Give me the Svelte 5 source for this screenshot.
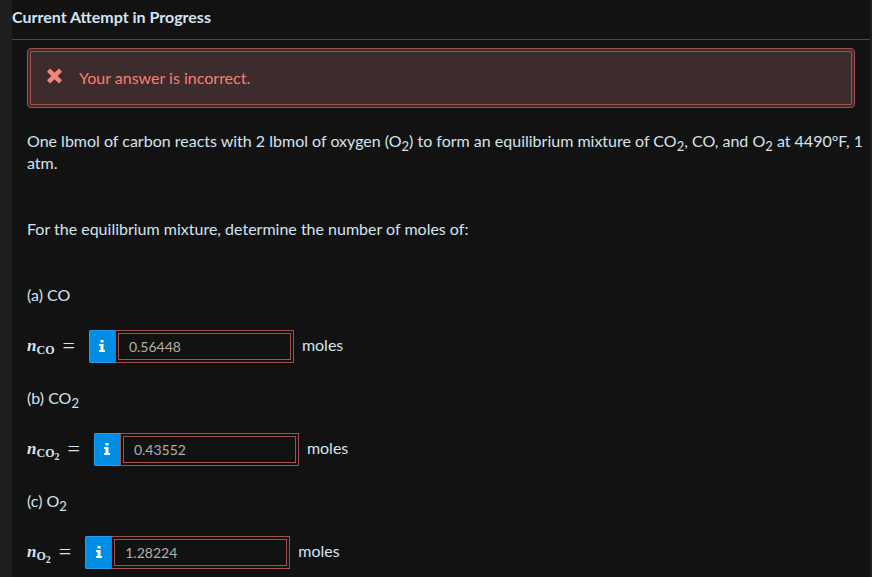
<script lang='ts'>
  interface Part {
    id: string
    label: string
    formula: string
    count?: string
    value: string
  }

  let parts = $state<Part[]>([
    { id: 'co', label: '(a)', formula: 'CO', value: '0.56448' },
    { id: 'co2', label: '(b)', formula: 'CO', count: '2', value: '0.43552' },
    { id: 'o2', label: '(c)', formula: 'O', count: '2', value: '1.28224' },
  ])
</script>

<div class='page'>
  <main class='question'>
    <h1>Current Attempt in Progress</h1>

    <div class='body'>
      <div class='alert' role='alert'>
        <svg class='cross' viewBox='0 0 16 16' aria-hidden='true'>
          <path d='M4.2 1 L8 4.8 L11.8 1 Q12.4 .5 13 1 L15 3 Q15.5 3.6 15 4.2 L11.2 8 L15 11.8 Q15.5 12.4 15 13 L13 15 Q12.4 15.5 11.8 15 L8 11.2 L4.2 15 Q3.6 15.5 3 15 L1 13 Q.5 12.4 1 11.8 L4.8 8 L1 4.2 Q.5 3.6 1 3 L3 1 Q3.6 .5 4.2 1 Z' />
        </svg>
        <span>Your answer is incorrect.</span>
      </div>

      <p>
        One lbmol of carbon reacts with 2 lbmol of oxygen (O<sub>2</sub>) to form an equilibrium mixture of CO<sub>2</sub>, CO, and O<sub>2</sub> at 4490°F, 1 atm.
      </p>
      <p>For the equilibrium mixture, determine the number of moles of:</p>

      {#each parts as part (part.id)}
        <section class='part'>
          <h2>{part.label} {part.formula}{#if part.count}<sub>{part.count}</sub>{/if}</h2>
          <div class='answer'>
            <label class='math' for={part.id}>
              <i>n</i><span class='index'>{part.formula}{#if part.count}<span class='count'>{part.count}</span>{/if}</span><span class='equals'>=</span>
            </label>
            <div class='field'>
              <button type='button' aria-label='Answer information'>
                <svg viewBox='0 0 6 12' aria-hidden='true'>
                  <path d='M1.5 0h3v2.5h-3zM0 4h4.5v6H6v2H0v-2h1.5V6H0z' />
                </svg>
              </button>
              <input id={part.id} type='text' bind:value={part.value} aria-invalid='true' />
            </div>
            <span class='unit'>moles</span>
          </div>
        </section>
      {/each}
    </div>
  </main>
</div>

<style>
  :global(body) {
    background: #1f1f1f;
  }

  .page {
    padding: 0 2px 0 12px;
    color: #d5e3ef;
    font: 16px/22px Lato, sans-serif;
  }

  .question {
    box-sizing: border-box;
    min-height: 100vh;
    background: #121212;
  }

  h1 {
    margin: 0;
    padding: 6px 0 11px;
    border-bottom: 1px solid #4a4a4a;
    font-size: 16px;
    font-weight: 700;
  }

  .body {
    padding: 8px 15px;
  }

  .alert {
    display: flex;
    align-items: center;
    gap: 16px;
    padding: 15px;
    border: 4px double #a4514b;
    border-radius: 4px;
    background: #3c2c2d;
    color: #fa7d75;
  }

  .cross {
    width: 17px;
    height: 16px;
    margin-bottom: 5px;
    fill: #f3857d;
  }

  p {
    margin: 0 -10px 44px 0;
  }

  .alert + p {
    margin-top: 22px;
  }

  sub {
    font-size: 13px;
    line-height: 0;
    vertical-align: -4px;
  }

  h2 {
    margin: 0;
    font-size: 16px;
    font-weight: 400;
  }

  .part {
    margin-bottom: 24px;
  }

  .part:last-child {
    margin-bottom: 0;
  }

  .answer {
    display: flex;
    align-items: center;
    gap: 8px;
    margin-top: 24px;
  }

  .math {
    margin-right: 6px;
    padding-bottom: 2px;
    font-family: 'Liberation Serif', serif;
    font-size: 17px;
    white-space: nowrap;
  }

  .math i {
    font-weight: 700;
  }

  .index {
    font-size: 12px;
    font-weight: 700;
    line-height: 0;
    vertical-align: -3px;
  }

  .count {
    font-size: 10px;
    vertical-align: -3px;
  }

  .equals {
    margin-left: 8px;
    font-size: 22px;
    line-height: 0;
    vertical-align: -2px;
  }

  .unit {
    padding-bottom: 3px;
  }

  .field {
    display: flex;
    height: 33px;
  }

  button {
    display: flex;
    align-items: center;
    justify-content: center;
    width: 26px;
    padding: 0;
    border: 1px solid #2b9bee;
    border-right: 0;
    border-radius: 2px 0 0 2px;
    background: #008de4;
  }

  button svg {
    width: 6px;
    height: 12px;
    margin-bottom: 2px;
    fill: #fff;
  }

  input {
    box-sizing: border-box;
    width: 179px;
    padding: 0 10px 1px;
    border: 4px double #a4514b;
    border-radius: 0;
    background: #121212;
    color: #b3afa8;
    font: 14px Lato, sans-serif;
  }
</style>
